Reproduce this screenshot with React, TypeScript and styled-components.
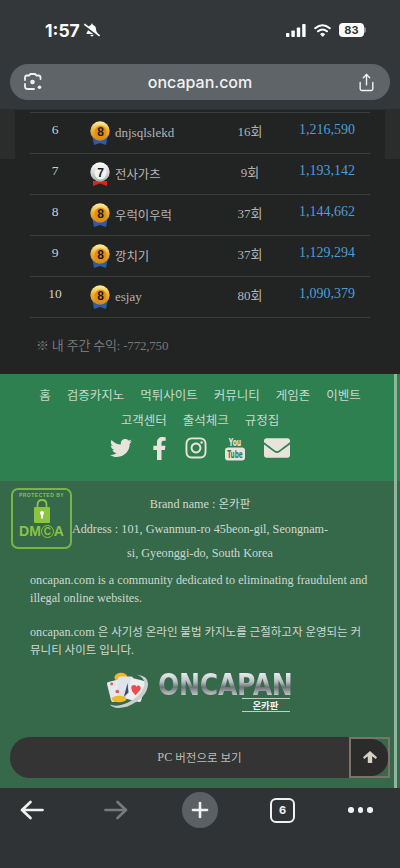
import React from 'react';
import styled, { createGlobalStyle } from 'styled-components';
import { Plus, Share } from 'lucide-react';
import { FaBellSlash, FaEnvelope, FaFacebookF, FaInstagram, FaTwitter } from 'react-icons/fa';

const SERIF = `"Liberation Serif", "Noto Sans CJK KR", serif`;
const SANS = `Inter, Roboto, "Liberation Sans", sans-serif`;

const rows = [
  { rank: 6, level: 8, name: 'dnjsqlslekd', count: '16회', amount: '1,216,590' },
  { rank: 7, level: 7, name: '전사가츠', korean: true, count: '9회', amount: '1,193,142' },
  { rank: 8, level: 8, name: '우럭이우럭', korean: true, count: '37회', amount: '1,144,662' },
  { rank: 9, level: 8, name: '깡치기', korean: true, count: '37회', amount: '1,129,294' },
  { rank: 10, level: 8, name: 'esjay', count: '80회', amount: '1,090,379' },
];

const navLinks = ['홈', '검증카지노', '먹튀사이트', '커뮤니티', '게임존', '이벤트', '고객센터', '출석체크', '규정집'];

const GlobalStyle = createGlobalStyle`
  html, body {
    margin: 0;
    padding: 0;
    background: #303336;
  }
  * {
    box-sizing: border-box;
  }
`;

const Screen = styled.div`
  width: 400px;
  height: 868px;
  display: flex;
  flex-direction: column;
  overflow: hidden;
  font-family: ${SERIF};
`;

const TopChrome = styled.header`
  height: 110px;
  background: #33373a;
  padding: 0 10px;
  border-bottom: 1px solid #2a2d2f;
`;

const StatusBar = styled.div`
  height: 64px;
  padding: 0 26px 4px 35px;
  display: flex;
  align-items: center;
  color: #fff;
  font-family: ${SANS};
`;

const Time = styled.span`
  font-size: 17.5px;
  font-weight: 700;
  margin-right: 4px;
`;

const StatusRight = styled.div`
  margin-left: auto;
  display: flex;
  align-items: center;
  gap: 8px;
`;

const Battery = styled.span`
  position: relative;
  width: 25px;
  height: 14px;
  border-radius: 4px;
  background: #fff;
  color: #33373a;
  font-size: 11px;
  font-weight: 700;
  line-height: 14px;
  text-align: center;

  &::after {
    content: '';
    position: absolute;
    right: -2px;
    top: 4px;
    width: 2px;
    height: 6px;
    border-radius: 0 2px 2px 0;
    background: #8b8e90;
  }
`;

const UrlBar = styled.div`
  height: 36px;
  border-radius: 18px;
  background: #5f6468;
  padding: 0 14px 0 13px;
  display: flex;
  align-items: center;
  justify-content: space-between;
  color: #f0f1f1;
`;

const UrlText = styled.span`
  font-family: ${SANS};
  font-size: 16px;
  font-weight: 500;
`;

const RankPanel = styled.section`
  height: 264px;
  background:
    linear-gradient(#2b2c2c, #2b2c2c) left top / 15px 49px no-repeat,
    linear-gradient(#2b2c2c, #2b2c2c) right top / 15px 49px no-repeat,
    #222323;
  padding: 2px 30px 0;
`;

const RankRow = styled.div`
  display: grid;
  grid-template-columns: 50px 145px 50px 1fr;
  height: 41px;
  align-items: center;
  border-bottom: 1px solid #3c3d3d;
  font-size: 13px;
  color: #b4b4b4;

  &:first-child {
    border-top: 1px solid #3c3d3d;
    height: 42px;
  }
`;

const Rank = styled.span`
  text-align: center;
  padding-bottom: 6px;
  color: #cfcfcf;
  font-size: 13.5px;
`;

const NameCell = styled.span`
  display: flex;
  align-items: center;
  gap: 5px;
  padding-left: 10px;
`;

const Name = styled.span<{ $korean?: boolean }>`
  padding-bottom: 1px;
  font-size: ${p => (p.$korean ? '12.4px' : '13px')};
`;

const Count = styled.span`
  text-align: center;
  padding-bottom: 6px;
`;

const Amount = styled.span`
  text-align: right;
  padding: 0 15px 6px 0;
  color: #4a9fd8;
  font-size: 14px;
`;

const WeeklyNote = styled.p`
  margin: 17px 0 0 6px;
  font-size: 13px;
  letter-spacing: -0.2px;
  color: #777;
`;

const GreenNav = styled.nav`
  height: 107px;
  background: #2e8050;
  padding: 8px 12px 0;
`;

const NavLinks = styled.div`
  display: flex;
  flex-wrap: wrap;
  justify-content: center;
  column-gap: 16px;
  font-family: "Noto Sans CJK KR", sans-serif;
  font-size: 12.5px;
  line-height: 25px;
  color: #c9d8cc;
`;

const SocialRow = styled.div`
  display: flex;
  justify-content: center;
  align-items: center;
  gap: 16px;
  margin-top: 3px;
  color: #e8e4dc;
`;

const FacebookIcon = styled(FaFacebookF)`
  margin-right: -3px;
`;

const MailIcon = styled(FaEnvelope)`
  margin-left: 2px;
`;

const Footer = styled.footer`
  position: relative;
  flex: 1;
  background: #36684a;
  padding-top: 11px;
  color: #cfd8d0;
`;

const ScrollThumb = styled.div`
  position: absolute;
  top: 374px;
  left: 394px;
  width: 3px;
  height: 414px;
  background: #8fb59e;
`;

const Badge = styled.div`
  position: absolute;
  left: 11px;
  top: 7px;
  width: 61px;
  height: 61px;
  border: 2px solid #7ab63f;
  border-radius: 7px;
  display: flex;
  flex-direction: column;
  align-items: center;
  color: #8ac440;
  font-family: "Liberation Sans", sans-serif;
  font-weight: 700;
`;

const BadgeTop = styled.span`
  font-size: 5px;
  letter-spacing: 0.5px;
  margin-top: 2px;
  line-height: 6px;
  white-space: nowrap;
`;

const BadgeName = styled.span`
  display: flex;
  align-items: center;
  font-size: 14px;
  line-height: 14px;
  margin-top: 1px;
  white-space: nowrap;
`;

const BadgeC = styled.span`
  width: 13px;
  height: 13px;
  border: 1px solid #8ac440;
  border-radius: 50%;
  font-size: 10px;
  line-height: 11px;
  text-align: center;
`;

const BrandBlock = styled.div`
  padding: 0 70px;
  text-align: center;
  font-size: 12.2px;
  line-height: 24.5px;
`;

const KoreanText = styled.span`
  font-size: 11.5px;
`;

const Description = styled.div`
  margin-top: 5px;
  padding: 0 30px;
  font-size: 12.2px;
  line-height: 18px;
`;

const Paragraph = styled.p`
  margin: 0 0 16px;
`;

const LogoRow = styled.div`
  margin-top: -4px;
  display: flex;
  justify-content: center;
  align-items: flex-start;
  gap: 8px;
  padding-right: 2px;
`;

const LogoWords = styled.div`
  width: 134px;
  display: flex;
  flex-direction: column;
  align-items: flex-end;
`;

const LogoText = styled.span`
  align-self: flex-start;
  transform: scaleX(0.9);
  transform-origin: left center;
  white-space: nowrap;
  font-family: "DejaVu Sans Condensed", "DejaVu Sans", sans-serif;
  font-weight: 700;
  font-size: 31px;
  line-height: 27px;
  letter-spacing: -0.3px;
  background: linear-gradient(#f4f6f7 0%, #b9c0c4 40%, #6d7479 60%, #dfe3e5 100%);
  -webkit-background-clip: text;
  background-clip: text;
  color: transparent;
`;

const LogoSub = styled.span`
  width: 48px;
  margin-right: 2px;
  border-top: 1px solid #c3d0c7;
  border-bottom: 1px solid #c3d0c7;
  text-align: center;
  font-family: "Noto Sans CJK KR", sans-serif;
  font-size: 9.5px;
  font-weight: 700;
  line-height: 12px;
  color: #f2f2f2;
`;

const PcRow = styled.div`
  display: flex;
  margin: 25px 10px 0;
  height: 41px;
`;

const PcButton = styled.div`
  flex: 1;
  background: #343434;
  border-radius: 20px 0 0 20px;
  display: flex;
  align-items: center;
  justify-content: center;
  gap: 3px;
  padding-left: 40px;
  color: #bdbdb8;
  font-size: 12.2px;
`;

const TopButton = styled.div`
  width: 41px;
  border: 2px solid #7a7468;
  display: flex;
`;

const TopButtonFace = styled.span`
  flex: 1;
  background: #2b2b2b;
  border-radius: 0 17px 17px 0;
  display: flex;
  align-items: center;
  justify-content: center;
`;

const BottomBar = styled.div`
  height: 80px;
  background: #303336;
  padding: 4px 0 0 20px;
  display: grid;
  grid-template-columns: 84px 78px 88px 78px auto;
  align-items: center;
  align-content: start;
  color: #eff0f0;
`;

const NewTab = styled.span`
  width: 36px;
  height: 36px;
  border-radius: 50%;
  background: #5b6064;
  display: flex;
  align-items: center;
  justify-content: center;
`;

const TabCount = styled.span`
  width: 25px;
  height: 25px;
  border: 2px solid #eff0f0;
  border-radius: 6px;
  display: flex;
  align-items: center;
  justify-content: center;
  font-family: ${SANS};
  font-size: 11px;
  font-weight: 700;
`;

const Dots = styled.span`
  display: flex;
  gap: 4px;
  align-items: center;
`;

const Dot = styled.i`
  width: 5.5px;
  height: 5.5px;
  border-radius: 50%;
  background: #eff0f0;
`;

const Medal = ({ level }: { level: number }) => {
  const gold = level === 8;
  const id = `medal-${level}`;
  return (
    <svg width="20" height="24" viewBox="0 0 20 24">
      <defs>
        <linearGradient id={id} x1="0" y1="0" x2="0" y2="1">
          <stop offset="0%" stopColor={gold ? '#fff0a8' : '#ffffff'} />
          <stop offset="45%" stopColor={gold ? '#f2b32c' : '#dcdcdc'} />
          <stop offset="100%" stopColor={gold ? '#c9851c' : '#a8a8a8'} />
        </linearGradient>
      </defs>
      <path
        d={gold ? 'M2.5 16 L4 24 L10 22 L16 24 L17.5 16 Z' : 'M3 19 L3 24 L10 21.5 L17 24 L17 19 Z'}
        fill={gold ? '#2f5aa8' : '#e3211c'}
      />
      <circle cx="10" cy="10" r="9.7" fill={`url(#${id})`} />
      <ellipse cx="10.5" cy="11" rx="6" ry="6.5" fill={gold ? '#e08f14' : '#f2f2f2'} />
      <text
        x="10.5"
        y="15"
        textAnchor="middle"
        fontFamily="Liberation Sans, sans-serif"
        fontWeight="700"
        fontSize="12"
        fill="#1c1a14"
      >
        {level}
      </text>
    </svg>
  );
};

const LensIcon = () => (
  <svg width="20" height="20" viewBox="0 0 20 20" fill="none" stroke="#f0f1f1" strokeWidth="1.8" strokeLinecap="round">
    <path d="M2 8 V5.5 Q2 3.5 4 3.5 H6 L7.5 2 H12 L13.5 3.5 H15.5 Q17.5 3.5 17.5 5.5 V7" />
    <path d="M2 12 V14.5 Q2 17 4.5 17 H11" />
    <circle cx="9.5" cy="10" r="2.3" fill="#f0f1f1" stroke="none" />
    <circle cx="16.5" cy="15.3" r="1.8" fill="#f0f1f1" stroke="none" />
  </svg>
);

const SignalIcon = () => (
  <svg width="20" height="13" viewBox="0 0 20 13" fill="#fff">
    <rect x="0" y="9" width="3.4" height="4" rx="0.8" />
    <rect x="5.4" y="6.5" width="3.4" height="6.5" rx="0.8" />
    <rect x="10.8" y="3.5" width="3.4" height="9.5" rx="0.8" />
    <rect x="16.2" y="0" width="3.4" height="13" rx="0.8" />
  </svg>
);

const WifiIcon = () => (
  <svg width="17" height="13" viewBox="0 0 17 13" fill="none" stroke="#fff" strokeWidth="2" strokeLinecap="round">
    <path d="M1.2 4.2 Q8.5 -1.6 15.8 4.2" />
    <path d="M4 7.3 Q8.5 3.6 13 7.3" />
    <path d="M8.5 12.2 L6.6 10 Q8.5 8.6 10.4 10 Z" fill="#fff" strokeWidth="1" />
  </svg>
);

const YoutubeIcon = () => (
  <svg width="22" height="25" viewBox="0 0 22 25">
    <text
      transform="translate(11 9.5) scale(0.8 1.25)"
      textAnchor="middle"
      fontFamily="DejaVu Sans Condensed, sans-serif"
      fontWeight="700"
      fontSize="8.5"
      fill="#e8e4dc"
    >
      You
    </text>
    <rect x="1" y="11.5" width="20" height="13" rx="3" fill="#e8e4dc" />
    <text
      transform="translate(11 21.5) scale(0.8 1.25)"
      textAnchor="middle"
      fontFamily="DejaVu Sans Condensed, sans-serif"
      fontWeight="700"
      fontSize="8"
      fill="#2e8050"
    >
      Tube
    </text>
  </svg>
);

const LockIcon = () => (
  <svg width="18" height="25" viewBox="0 0 18 25">
    <path d="M4.5 10 V6.5 Q4.5 2 9 2 Q13.5 2 13.5 6.5 V10" fill="none" stroke="#8ac440" strokeWidth="1.8" />
    <rect x="1" y="9" width="16" height="16" rx="1" fill="#8ac440" />
    <circle cx="9" cy="15" r="2" fill="#fff" />
    <rect x="8" y="15.5" width="2" height="5" fill="#fff" />
  </svg>
);

const CardsLogo = () => (
  <svg width="43" height="41" viewBox="0 0 46 42">
    <ellipse cx="15" cy="6" rx="7" ry="5" fill="#f0b92a" />
    <g>
      <rect x="2" y="9" width="16" height="22" rx="2" fill="#e6e8ec" transform="rotate(-14 10 20)" />
      <rect x="12" y="5" width="16" height="24" rx="2" fill="#dfe3ea" />
      <rect x="23" y="8" width="16" height="23" rx="2" fill="#eceef0" transform="rotate(14 31 20)" />
    </g>
    <circle cx="5" cy="13" r="1.5" fill="#e25a5a" />
    <path d="M18 27 L22 12 L23 22 Z" fill="#3f4c66" />
    <path d="M26 17 Q26 14 29 14 Q31 14 31.5 16 Q33 14 35 15 Q37 17 35 20 L30.5 25 Q26 21 26 17 Z" fill="#ee4b4b" />
    <circle cx="11" cy="21" r="2" fill="#e25a5a" />
    <ellipse cx="13" cy="29" rx="8" ry="3.5" fill="#f0b92a" />
    <path
      d="M32 3 Q44 4 44 13 Q43 28 22 37 Q8 41 3 35 Q10 38 22 33 Q40 24 40 12 Q40 6 32 3 Z"
      fill="#c9cfcb"
    />
  </svg>
);

const NavArrow = ({ flip, color }: { flip?: boolean; color: string }) => (
  <svg
    width="24"
    height="20"
    viewBox="0 0 24 20"
    fill="none"
    stroke={color}
    strokeWidth="2.7"
    strokeLinecap="round"
    strokeLinejoin="round"
  >
    <path d={flip ? 'M22 10 H1.5 M13.5 2 L22 10 L13.5 18' : 'M2 10 H22.5 M10.5 2 L2 10 L10.5 18'} />
  </svg>
);

const UpArrow = () => (
  <svg width="14" height="12" viewBox="0 0 14 12" fill="#d8d0c0">
    <path d="M7 0 L14 6.3 L12.8 8 L9.2 5.2 V12 H4.8 V5.2 L1.2 8 L0 6.3 Z" />
  </svg>
);

const App = () => {
  return (
    <Screen>
      <GlobalStyle />
      <TopChrome>
        <StatusBar>
          <Time>1:57</Time>
          <FaBellSlash size={16} />
          <StatusRight>
            <SignalIcon />
            <WifiIcon />
            <Battery>83</Battery>
          </StatusRight>
        </StatusBar>
        <UrlBar>
          <LensIcon />
          <UrlText>oncapan.com</UrlText>
          <Share size={19} strokeWidth={1.8} />
        </UrlBar>
      </TopChrome>

      <RankPanel>
        {rows.map(row => (
          <RankRow key={row.rank}>
            <Rank>{row.rank}</Rank>
            <NameCell>
              <Medal level={row.level} />
              <Name $korean={row.korean}>{row.name}</Name>
            </NameCell>
            <Count>{row.count}</Count>
            <Amount>{row.amount}</Amount>
          </RankRow>
        ))}
        <WeeklyNote>※ 내 주간 수익: -772,750</WeeklyNote>
      </RankPanel>

      <GreenNav>
        <NavLinks>
          {navLinks.map(link => (
            <span key={link}>{link}</span>
          ))}
        </NavLinks>
        <SocialRow>
          <FaTwitter size={22} />
          <FacebookIcon size={23} />
          <FaInstagram size={24} />
          <YoutubeIcon />
          <MailIcon size={26} />
        </SocialRow>
      </GreenNav>

      <Footer>
        <Badge>
          <BadgeTop>PROTECTED BY</BadgeTop>
          <LockIcon />
          <BadgeName>
            DM<BadgeC>C</BadgeC>A
          </BadgeName>
        </Badge>
        <BrandBlock>
          Brand name : <KoreanText>온카판</KoreanText>
          <br />
          Address : 101, Gwanmun-ro 45beon-gil, Seongnam-si, Gyeonggi-do, South Korea
        </BrandBlock>
        <Description>
          <Paragraph>oncapan.com is a community dedicated to eliminating fraudulent and illegal online websites.</Paragraph>
          <Paragraph>
            oncapan.com <KoreanText>은 사기성 온라인 불법 카지노를 근절하고자 운영되는 커뮤니티 사이트 입니다.</KoreanText>
          </Paragraph>
        </Description>
        <LogoRow>
          <CardsLogo />
          <LogoWords>
            <LogoText>ONCAPAN</LogoText>
            <LogoSub>온카판</LogoSub>
          </LogoWords>
        </LogoRow>
        <PcRow>
          <PcButton>
            PC <KoreanText>버전으로 보기</KoreanText>
          </PcButton>
          <TopButton>
            <TopButtonFace>
              <UpArrow />
            </TopButtonFace>
          </TopButton>
        </PcRow>
      </Footer>

      <BottomBar>
        <NavArrow color="#eff0f0" />
        <NavArrow flip color="#77797b" />
        <NewTab>
          <Plus size={24} strokeWidth={2.6} />
        </NewTab>
        <TabCount>6</TabCount>
        <Dots>
          <Dot />
          <Dot />
          <Dot />
        </Dots>
      </BottomBar>
      <ScrollThumb />
    </Screen>
  );
};

export default App;
